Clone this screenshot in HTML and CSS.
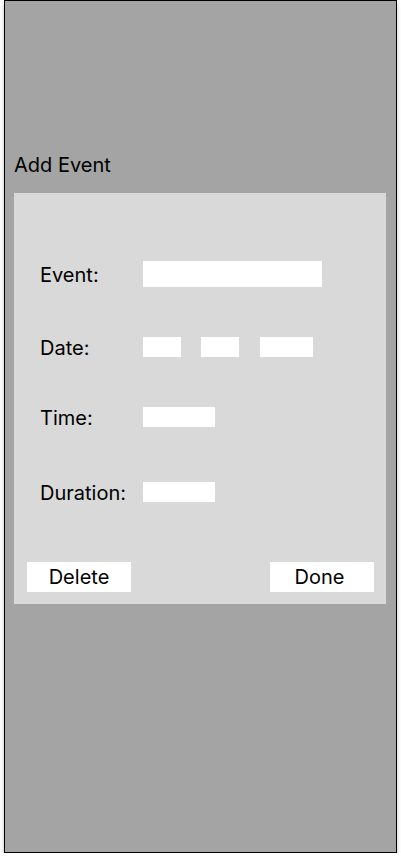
FILE: index.html
```html
<!DOCTYPE html>
<html>
<head>
<meta charset="utf-8">
<link rel="stylesheet" href="styles.css">
</head>
<body>
<div class="frame">
  <h1 class="title">Add Event</h1>
  <div class="panel">
    <div class="row row-event">
      <span class="label">Event:</span>
      <div class="box box-event"></div>
    </div>
    <div class="row row-date">
      <span class="label">Date:</span>
      <div class="date-boxes">
        <div class="box box-d1"></div>
        <div class="box box-d2"></div>
        <div class="box box-d3"></div>
      </div>
    </div>
    <div class="row row-time">
      <span class="label">Time:</span>
      <div class="box box-short"></div>
    </div>
    <div class="row row-duration">
      <span class="label">Duration:</span>
      <div class="box box-short"></div>
    </div>
    <div class="actions">
      <button class="btn">Delete</button>
      <button class="btn btn-done">Done</button>
    </div>
  </div>
</div>
</body>
</html>
```

FILE: styles.css
```css
* { box-sizing: border-box; }
html, body { margin: 0; padding: 0; background: #ffffff; }
body { font-family: Inter, "Noto Sans", sans-serif; color: #000; }

.frame {
  margin-left: 4px;
  width: 393px;
  height: 853px;
  border: 1px solid #000;
  background: #a4a4a4;
  box-shadow: 0 4px 4px rgba(0, 0, 0, 0.25);
  padding-top: 152px;
}

.title {
  margin: 0 0 16px 9px;
  font-size: 20px;
  font-weight: 400;
  line-height: 24px;
}

.panel {
  margin-left: 9px;
  width: 372px;
  height: 411px;
  background: #d9d9d9;
  padding: 68px 12px 12px 26px;
  display: flex;
  flex-direction: column;
}

.row {
  display: flex;
  align-items: center;
}
.row-event { height: 26px; }
.row-date { height: 20px; margin-top: 50px; }
.row-time { height: 20px; margin-top: 50px; }
.row-duration { height: 20px; margin-top: 55px; }

.label {
  width: 103px;
  flex: none;
  font-size: 20px;
  line-height: 20px;
  position: relative;
  top: 1px;
}

.box { background: #ffffff; flex: none; }
.box-event { width: 179px; height: 26px; }
.box-short { width: 72px; height: 20px; }

.date-boxes { display: flex; }
.box-d1 { width: 38px; height: 20px; }
.box-d2 { width: 38px; height: 20px; margin-left: 20px; }
.box-d3 { width: 53px; height: 20px; margin-left: 21px; }

.actions {
  margin-top: 60px;
  margin-left: -13px;
  display: flex;
  justify-content: space-between;
}

.btn {
  width: 104px;
  height: 30px;
  border: 0;
  padding: 0;
  background: #ffffff;
  font-family: Inter, "Noto Sans", sans-serif;
  font-size: 20px;
  line-height: 30px;
  color: #000;
}
.btn-done { padding-right: 5px; }
```
